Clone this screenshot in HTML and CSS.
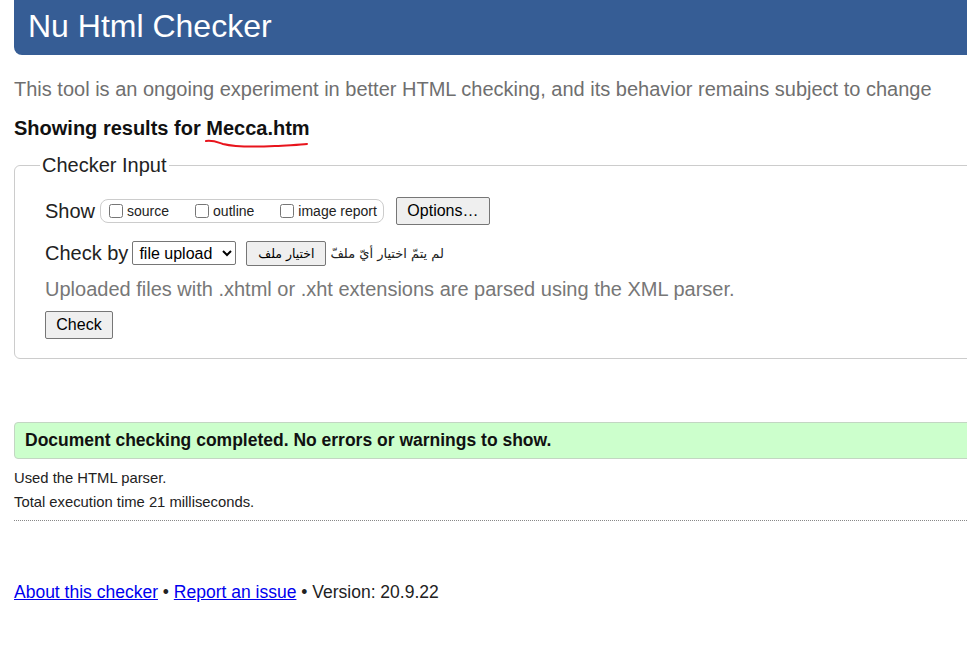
FILE: index.html
```html
<!DOCTYPE html>
<html lang="en">
<head>
<meta charset="utf-8">
<title>Nu Html Checker</title>
<link rel="stylesheet" href="styles.css">
</head>
<body>
<h1 class="title">Nu Html Checker</h1>
<p class="intro">This tool is an ongoing experiment in better HTML checking, and its behavior remains subject to change</p>
<h2 class="results">Showing results for <span class="fname">Mecca.htm<svg class="squiggle" width="104" height="10" viewBox="0 0 104 10"><path d="M1 2 C 8 1, 12 3, 18 5 C 30 8, 50 8, 70 7 C 85 6, 95 6, 102 5" fill="none" stroke="#e8141c" stroke-width="2" stroke-linecap="round"/></svg></span></h2>

<fieldset class="input">
  <legend class="legend">Checker Input</legend>
  <div class="row show-row">
    <span class="label">Show</span>
    <span class="opts">
      <label class="opt"><input type="checkbox"> source</label>
      <label class="opt"><input type="checkbox"> outline</label>
      <label class="opt"><input type="checkbox"> image report</label>
    </span>
    <button class="btn options" type="button">Options…</button>
  </div>
  <div class="row check-row">
    <span class="label">Check by</span>
    <select class="select"><option>file upload</option></select>
    <span class="file">
      <button class="btn filebtn" type="button" dir="rtl">اختيار ملف</button>
      <span class="nofile" dir="rtl">لم يتمّ اختيار أيّ ملفّ</span>
    </span>
  </div>
  <p class="hint">Uploaded files with .xhtml or .xht extensions are parsed using the XML parser.</p>
  <button class="btn check" type="button">Check</button>
</fieldset>

<p class="success">Document checking completed. No errors or warnings to show.</p>
<p class="meta">Used the HTML parser.</p>
<p class="meta">Total execution time 21 milliseconds.</p>
<hr class="sep">

<p class="footer"><a href="#">About this checker</a> • <a href="#">Report an issue</a> • Version: 20.9.22</p>
</body>
</html>
```
FILE: styles.css
```css
html {
  overflow: hidden;
}
body {
  margin: 0;
  padding: 0 0 0 14px;
  font-family: "Liberation Sans", Arial, sans-serif;
  color: #222;
  background: #fff;
}
.title {
  margin: 0 -40px 0 0;
  height: 55px;
  padding: 0 0 0 14px;
  background: #365d95;
  color: #fff;
  font-weight: normal;
  font-size: 32px;
  line-height: 52px;
  border-radius: 0 0 0 8px;
}
.intro {
  margin: 22px 0 0;
  font-size: 20px;
  line-height: 24px;
  color: #6f6f6f;
  white-space: nowrap;
}
.results {
  margin: 15px 0 0;
  font-size: 20px;
  line-height: 24px;
  font-weight: bold;
  color: #111;
}
.fname {
  position: relative;
}
.squiggle {
  position: absolute;
  left: -1px;
  top: 22px;
}
.input {
  margin: 14px -40px 0 0;
  padding: 8px 30px 19px 30px;
  border: 1px solid #ccc;
  border-radius: 6px;
}
.legend {
  padding: 0 2px;
  margin-left: -5px;
  font-size: 20px;
  color: #222;
}
.row {
  display: flex;
  align-items: center;
}
.label {
  font-size: 20px;
  color: #222;
}
.show-row {
  margin-top: 12px;
  height: 28px;
}
.opts {
  display: flex;
  align-items: center;
  margin-left: 5px;
  height: 22px;
  padding: 0 6px 0 6px;
  border: 1px solid #ccc;
  border-radius: 8px;
  font-size: 14px;
}
.opt {
  display: flex;
  align-items: center;
  margin-right: 24px;
  color: #222;
}
.opt:last-child {
  margin-right: 0;
}
.opt input {
  margin: 0 4px 0 2px;
  width: 14px;
  height: 14px;
}
.btn {
  font-family: "Liberation Sans", Arial, sans-serif;
  background: #efefef;
  border: 1px solid #767676;
  border-radius: 2px;
  color: #000;
  padding: 0;
}
.options {
  margin-left: 12px;
  width: 94px;
  height: 28px;
  font-size: 16px;
}
.check-row {
  margin-top: 16px;
  height: 24px;
}
.select {
  margin-left: 4px;
  width: 104px;
  height: 24px;
  font-family: "Liberation Sans", Arial, sans-serif;
  font-size: 16px;
  border: 1px solid #767676;
  border-radius: 2px;
  background: #fff;
  color: #000;
  padding: 0 0 0 2px;
}
.file {
  display: flex;
  align-items: center;
  margin-left: 10px;
}
.filebtn {
  width: 80px;
  height: 25px;
  font-family: "DejaVu Sans", sans-serif;
  font-size: 12.5px;
}
.nofile {
  margin-left: 4px;
  font-family: "DejaVu Sans", sans-serif;
  font-size: 13px;
  color: #222;
}
.hint {
  margin: 12px 0 0;
  font-size: 20px;
  line-height: 24px;
  color: #777;
  white-space: nowrap;
}
.check {
  margin-top: 10px;
  width: 68px;
  height: 28px;
  font-size: 16px;
}
.success {
  margin: 63px -40px 0 0;
  height: 37px;
  padding: 0 0 0 10px;
  background: #ccffcc;
  border: 1px solid #c3d6c3;
  border-radius: 4px;
  font-size: 17.5px;
  line-height: 35px;
  font-weight: bold;
  color: #111;
  box-sizing: border-box;
}
.meta {
  margin: 0;
  font-size: 14.8px;
  line-height: 24px;
  color: #222;
}
.success + .meta {
  margin-top: 7px;
}
.sep {
  margin: 6px -40px 0 0;
  border: 0;
  border-top: 1px dotted #888;
  height: 0;
}
.footer {
  margin: 59px 0 0;
  font-size: 17.5px;
  line-height: 24px;
  color: #222;
}
.footer a {
  color: #0000ee;
}
```
